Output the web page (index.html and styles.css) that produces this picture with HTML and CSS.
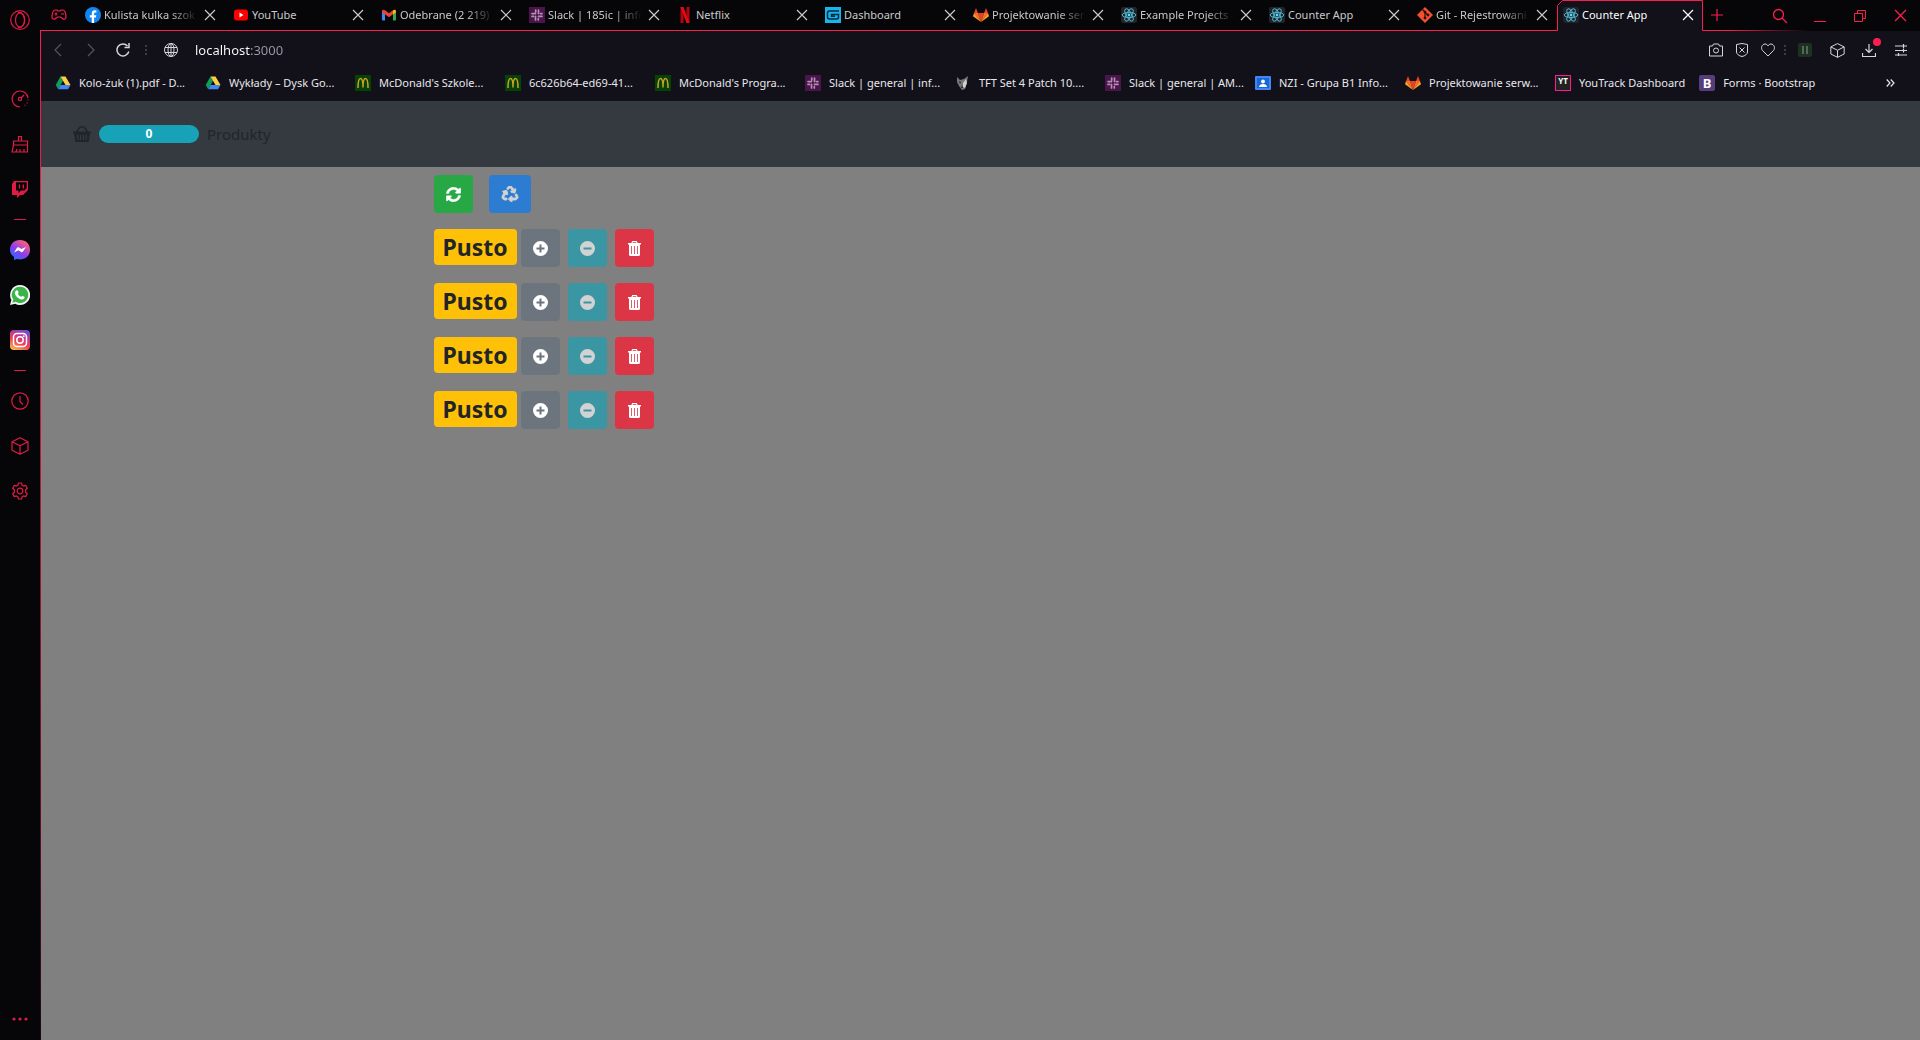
FILE: index.html
```html
<!DOCTYPE html>
<html lang="pl">
<head>
<meta charset="utf-8">
<meta name="viewport" content="width=device-width, initial-scale=1">
<title>Counter App</title>
<link rel="stylesheet" href="styles.css">
</head>
<body>
<svg class="sprite" aria-hidden="true">
  <symbol id="close" viewBox="0 0 12 12"><path d="M1 1l10 10M11 1L1 11" fill="none" stroke="currentColor" stroke-width="1.2"/></symbol>
  <symbol id="cube" viewBox="0 0 18 18"><path d="M9 .7l8 4v8.500l-8 4-8-4V4.700zM1 4.700l8 4 8-4M9 8.700v8.500" fill="none" stroke="currentColor" stroke-width="1.200" stroke-linejoin="round"/></symbol>
  <symbol id="slack" viewBox="0 0 16 16"><path fill="#4a154b" d="M0 0h16v16H0z"/><g fill="none" stroke="#b58fb6" stroke-width="1.700" stroke-linecap="round"><path d="M6.700 5V3M9.500 6.600V3M11.500 6.600H13M9.500 9.400H13M9.300 11.500V13M6.500 9.400V13M4.500 9.400H3M6.500 6.600H3"/></g></symbol>
  <symbol id="react" viewBox="0 0 16 16"><rect width="16" height="16" rx="2" fill="#20232a"/><g fill="none" stroke="#4fb3cc" stroke-width="1"><ellipse cx="8" cy="8" rx="6.800" ry="2.600"/><ellipse cx="8" cy="8" rx="6.800" ry="2.600" transform="rotate(60 8 8)"/><ellipse cx="8" cy="8" rx="6.800" ry="2.600" transform="rotate(120 8 8)"/></g><circle cx="8" cy="8" r="1.400" fill="#61dafb"/></symbol>
  <symbol id="gitlab" viewBox="0 0 16 16"><path fill="#e24329" d="M8 15L5 6h6z"/><path fill="#fc6d26" d="M8 15L5 6H1zM8 15l3-9h4z"/><path fill="#fca326" d="M1 6l-1 3.200L8 15zM15 6l1 3.200L8 15z"/><path fill="#e24329" d="M1 6l2-5 2 5zM11 6l2-5 2 5z"/></symbol>
  <symbol id="drive" viewBox="0 0 16 16"><path fill="#0f9d58" d="M5.500 1.500L.7 10l2.500 4.200L8 5.800z"/><path fill="#ffcd40" d="M5.500 1.500h5l5 8.500h-5z"/><path fill="#4285f4" d="M5.500 10h10l-2.500 4.200H3.200z"/></symbol>
  <symbol id="mcd" viewBox="0 0 16 16"><path fill="#064206" d="M0 0h16v16H0z"/><path d="M3 13C3 7 4 3.500 5.500 3.500S8 7 8 12.500C8 7 9 3.500 10.500 3.500S13 7 13 13" fill="none" stroke="#c9a227" stroke-width="1.500"/></symbol>
  <symbol id="refresh" viewBox="0 0 512 512"><path fill="currentColor" stroke="currentColor" stroke-width="16" d="M370.720 133.280C339.458 104.008 298.888 87.962 255.848 88c-77.458.068-144.328 53.178-162.791 126.850-1.344 5.363-6.122 9.150-11.651 9.150H24.103c-7.498 0-13.194-6.807-11.807-14.176C33.933 94.924 134.813 8 256 8c66.448 0 126.791 26.136 171.315 68.685L463.030 40.970C478.149 25.851 504 36.559 504 57.941V192c0 13.255-10.745 24-24 24H345.941c-21.382 0-32.090-25.851-16.971-40.971l41.750-41.749zM32 296h134.059c21.382 0 32.090 25.851 16.971 40.971l-41.750 41.750c31.262 29.273 71.835 45.319 114.876 45.280 77.418-.070 144.315-53.144 162.787-126.849 1.344-5.363 6.122-9.150 11.651-9.150h57.304c7.498 0 13.194 6.807 11.807 14.176C478.067 417.076 377.187 504 256 504c-66.448 0-126.791-26.136-171.315-68.685L48.970 471.030C33.851 486.149 8 475.441 8 454.059V320c0-13.255 10.745-24 24-24z"/></symbol>
  <symbol id="recycle" viewBox="0 0 512 512"><path fill="currentColor" stroke="currentColor" stroke-width="30" d="M184.561 261.903c3.232 13.997-12.123 24.635-24.068 17.168l-40.736-25.455-50.867 81.402C55.606 356.273 70.960 384 96.012 384H148c6.627 0 12 5.373 12 12v40c0 6.627-5.373 12-12 12H96.115c-75.334 0-121.302-83.048-81.408-146.880l50.822-81.388-40.725-25.448c-12.081-7.547-8.966-25.961 4.879-29.158l110.237-25.450c8.611-1.988 17.201 3.381 19.189 11.990l25.452 110.237zm98.561-182.915l41.289 66.076-40.740 25.457c-12.051 7.528-9 25.953 4.879 29.158l110.237 25.450c8.672 1.999 17.215-3.438 19.189-11.990l25.450-110.237c3.197-13.844-11.990-24.719-24.068-17.168l-40.687 25.424-41.263-66.082c-37.521-60.033-125.209-60.171-162.816 0l-17.963 28.766c-3.510 5.620-1.800 13.021 3.820 16.533l33.919 21.195c5.620 3.512 13.024 1.803 16.536-3.817l17.961-28.743c12.712-20.341 41.973-19.676 54.257-.022zM497.288 301.120l-27.515-44.065c-3.511-5.623-10.916-7.334-16.538-3.821l-33.861 21.159c-5.620 3.512-7.330 10.915-3.818 16.536l27.564 44.112c13.257 21.211-2.057 48.960-27.136 48.960H320V336.020c0-14.213-17.242-21.383-27.313-11.313l-80 79.981c-6.249 6.248-6.249 16.379 0 22.627l80 79.989C302.689 517.308 320 510.300 320 495.989V448h95.880c75.274 0 121.335-82.997 81.408-146.880z"/></symbol>
  <symbol id="plus" viewBox="0 0 15 15"><path fill="currentColor" fill-rule="evenodd" d="M7.500 0a7.500 7.500 0 1 0 0 15 7.500 7.500 0 0 0 0-15zM6.500 3.500h2v3h3v2h-3v3h-2v-3h-3v-2h3z"/></symbol>
  <symbol id="minus" viewBox="0 0 15 15"><path fill="currentColor" fill-rule="evenodd" d="M7.500 0a7.500 7.500 0 1 0 0 15 7.500 7.500 0 0 0 0-15zM3.500 6.500h8v2h-8z"/></symbol>
  <symbol id="trash" viewBox="0 0 15 15"><path fill="currentColor" fill-rule="evenodd" d="M5.300 0h4.400l1 2H14v1.500h-1V13a1.800 1.800 0 0 1-1.800 2H3.800A1.800 1.800 0 0 1 2 13V3.500H1V2h3.300zM5.900 1.200L5.600 2h3.800l-.3-.8zM4.200 5v8h.8V5zm3 0v8h.8V5zm3 0v8h.8V5z"/></symbol>
</svg>

<nav class="sidebar" aria-label="Panel boczny">
  <button class="side-btn side-logo" aria-label="Opera"><svg width="20" height="20" viewBox="0 0 20 20"><g fill="none" stroke="currentColor" stroke-width="1.200"><circle cx="10" cy="10" r="9.300"/><ellipse cx="10" cy="10" rx="4.500" ry="7"/><path d="M8 2.500c9-1 9 16 0 15"/></g></svg></button>
  <button class="side-btn" aria-label="GX Control"><svg width="18" height="18" viewBox="0 0 18 18"><g fill="none" stroke="currentColor" stroke-width="1.200"><path d="M9 17A8 8 0 1 1 17 8"/><path d="M17 9.500A8 8 0 0 1 12 16.500" stroke-dasharray="1 2"/><circle cx="9" cy="9" r="1.600"/><path d="M10 8l3-3"/></g></svg></button>
  <button class="side-btn" aria-label="GX Cleaner"><svg width="18" height="18" viewBox="0 0 18 18"><path d="M7.500 6V1.500h3V6M2.500 6h14v4h-14zM2.500 10L1 17h15.500v-7M5 17l1-3M9 17v-3M13 17v-3" fill="none" stroke="currentColor" stroke-width="1.200"/></svg></button>
  <button class="side-btn" aria-label="Twitch"><svg width="18" height="18" viewBox="0 0 18 18"><path fill="currentColor" fill-rule="evenodd" d="M3 1h14v9l-5 5H9l-3 3v-3H1V4zM5 2.300v8.200h2.500V13L10 10.500h3.500l2.200-2.200v-6z"/><path d="M8.500 4.500v4M12.300 4.500v4" stroke="currentColor" stroke-width="1.300"/></svg></button>
  <hr class="side-sep">
  <button class="side-btn" aria-label="Messenger"><svg width="20" height="20" viewBox="0 0 20 20"><defs><linearGradient id="msg" x1="0" y1="1" x2=".7" y2="0"><stop offset="0" stop-color="#0a7cff"/><stop offset=".5" stop-color="#8a3cf0"/><stop offset="1" stop-color="#ff6178"/></linearGradient></defs><path fill="url(#msg)" d="M10 0c6 0 10 4.200 10 9.700s-4 9.700-10 9.700c-1 0-2-.1-3-.4l-3 1V17C1.500 15.200 0 12.600 0 9.700 0 4.200 4 0 10 0z"/><path fill="#fff" d="M4 12.500L7 7.800c.5-.7 1.300-.8 2-.4l2.400 1.700L16 6.900l-3 4.700c-.5.700-1.300.9-2 .4l-2.400-1.700z"/></svg></button>
  <button class="side-btn" aria-label="WhatsApp"><svg width="20" height="20" viewBox="0 0 20 20"><path fill="#f4f4f4" d="M10 0a10 10 0 1 1-4.800 18.700L0 20l1.400-5A10 10 0 0 1 10 0z"/><path fill="#3ab449" d="M10.100 1.700a8.200 8.200 0 1 1-4.500 15.100l-3.200.9.900-3.100a8.200 8.200 0 0 1 6.800-12.900z"/><path fill="#fff" d="M6.700 5.300c.6-.2 1 0 1.200.5l.7 1.700c0 .5-.6.900-.9 1.300.8 1.500 2 2.500 3.500 3.200l1.100-1.200 2.300 1.100c.2 1.700-1.300 2.600-2.700 2.500-3.500-.5-6.400-3.200-7.100-6.200 0-1.200.7-2.500 1.900-2.900z"/></svg></button>
  <button class="side-btn" aria-label="Instagram"><svg width="20" height="20" viewBox="0 0 20 20"><defs><linearGradient id="ig" x1=".2" y1="1" x2=".7" y2="0"><stop offset="0" stop-color="#fdb94e"/><stop offset=".4" stop-color="#ee4156"/><stop offset=".75" stop-color="#b53aa0"/><stop offset="1" stop-color="#6a4fd0"/></linearGradient></defs><rect width="20" height="20" rx="4" fill="url(#ig)"/><g fill="none" stroke="#fff" stroke-width="1.500"><rect x="3.500" y="3.500" width="13" height="13" rx="3.500"/><circle cx="10" cy="10" r="3.200"/></g><circle cx="13.800" cy="6.200" r=".9" fill="#fff"/></svg></button>
  <hr class="side-sep">
  <button class="side-btn" aria-label="Historia"><svg width="18" height="18" viewBox="0 0 18 18"><g fill="none" stroke="currentColor" stroke-width="1.200"><circle cx="9" cy="9" r="8.200"/><path d="M9 4v5.500l3 3"/></g></svg></button>
  <button class="side-btn" aria-label="Rozszerzenia"><svg width="18" height="18"><use href="#cube"/></svg></button>
  <button class="side-btn" aria-label="Ustawienia"><svg width="18" height="18" viewBox="0 0 18 18"><g fill="none" stroke="currentColor" stroke-width="1.200" stroke-linejoin="round"><circle cx="9" cy="9" r="2.800"/><path d="M7.400 1h3.200l.5 2.300 1.400.8 2.200-.7 1.600 2.800-1.700 1.600v2.400l1.700 1.600-1.600 2.800-2.200-.7-1.400.8-.5 2.300H7.400l-.5-2.300-1.400-.8-2.200.7-1.600-2.800 1.700-1.600V7.800L1.700 6.200l1.600-2.800 2.200.7 1.400-.8z"/></g></svg></button>
  <button class="side-btn side-more" aria-label="Więcej"><svg width="16" height="4" viewBox="0 0 16 4" fill="currentColor"><circle cx="2" cy="2" r="1.600"/><circle cx="8" cy="2" r="1.600"/><circle cx="14" cy="2" r="1.600"/></svg></button>
</nav>

<div class="window">
  <header class="tabstrip">
    <button class="gx-btn" aria-label="GX Corner"><svg width="16" height="12" viewBox="0 0 16 12"><g fill="none" stroke="currentColor" stroke-width="1.200"><path d="M4 1h2l1 1h2l1-1h2c2 0 3 4 3 7 0 2-2 3-3.500 1.500L9.500 8h-3l-2 1.500C3 11 1 10 1 8c0-3 1-7 3-7z"/><path d="M5 3.500v3M3.500 5h3M10 5h3"/></g></svg></button>
    <div class="tabs">
      <div class="tab"><svg class="fav" viewBox="0 0 16 16"><circle cx="8" cy="8" r="8" fill="#1285f3"/><path fill="#fff" d="M6.800 16v-5.500h-2V8.200h2V6.400c0-2 1.200-3.100 3-3.100l1.600.1v2h-1c-1 0-1.300.6-1.300 1.200v1.600h2.200l-.4 2.300H9.100V16z"/></svg><a class="title faded" href="#">Kulista kulka szok</a><button class="close" aria-label="Zamknij"><svg><use href="#close"/></svg></button></div>
      <div class="tab"><svg class="fav" viewBox="0 0 16 16"><rect x="1" y="2.500" width="14" height="11" rx="3" fill="#f00"/><path fill="#fff" d="M6.500 5.500v5L10.500 8z"/></svg><a class="title" href="#">YouTube</a><button class="close" aria-label="Zamknij"><svg><use href="#close"/></svg></button></div>
      <div class="tab"><svg class="fav" viewBox="0 0 16 16"><path fill="#4285f4" d="M1 4l3 2v7.500H2a1 1 0 0 1-1-1z"/><path fill="#34a853" d="M15 4l-3 2v7.500h2a1 1 0 0 0 1-1z"/><path fill="#ea4335" d="M1 4.300C1 2.500 2.500 2.300 4 3.300l4 3 4-3v4L8 10.300 1 5.300z"/><path fill="#fbbc04" d="M12 3.300c1.500-1 3-.8 3 1v1l-3 2.200z"/></svg><a class="title faded" href="#">Odebrane (2 219)</a><button class="close" aria-label="Zamknij"><svg><use href="#close"/></svg></button></div>
      <div class="tab"><svg class="fav"><use href="#slack"/></svg><a class="title faded" href="#">Slack | 185ic | info</a><button class="close" aria-label="Zamknij"><svg><use href="#close"/></svg></button></div>
      <div class="tab"><svg class="fav" viewBox="0 0 16 16"><path fill="#b1060f" d="M3.500 0h3v16h-3zM9.500 0h3v16h-3z"/><path fill="#e50914" d="M3.500 0h3l6 16h-3z"/></svg><a class="title" href="#">Netflix</a><button class="close" aria-label="Zamknij"><svg><use href="#close"/></svg></button></div>
      <div class="tab"><svg class="fav" viewBox="0 0 16 16"><path fill="#18b4ee" d="M0 0h16v16H0z"/><path d="M14 4H4.500Q2.500 4 2.500 6v4q0 2 2 2h7q2 0 2-2V7.500H6.500v1.700H10" fill="none" stroke="#072a3a" stroke-width="1.500"/></svg><a class="title" href="#">Dashboard</a><button class="close" aria-label="Zamknij"><svg><use href="#close"/></svg></button></div>
      <div class="tab"><svg class="fav"><use href="#gitlab"/></svg><a class="title faded" href="#">Projektowanie ser</a><button class="close" aria-label="Zamknij"><svg><use href="#close"/></svg></button></div>
      <div class="tab"><svg class="fav"><use href="#react"/></svg><a class="title faded" href="#">Example Projects -</a><button class="close" aria-label="Zamknij"><svg><use href="#close"/></svg></button></div>
      <div class="tab"><svg class="fav"><use href="#react"/></svg><a class="title" href="#">Counter App</a><button class="close" aria-label="Zamknij"><svg><use href="#close"/></svg></button></div>
      <div class="tab"><svg class="fav" viewBox="0 0 16 16"><path fill="#f4502f" d="M8 0l8 8-8 8-8-8z"/><g stroke="#1a0d0a" fill="#1a0d0a"><path d="M5.500 2.500L8 5v6M8 5.500l3 2.500" fill="none" stroke-width="1.100"/><circle cx="8" cy="5" r="1"/><circle cx="8" cy="11" r="1"/><circle cx="11" cy="8" r="1"/></g></svg><a class="title faded" href="#">Git - Rejestrowani</a><button class="close" aria-label="Zamknij"><svg><use href="#close"/></svg></button></div>
      <div class="tab active"><svg class="tab-frame" viewBox="0 0 147 31" preserveAspectRatio="none"><path d="M0 31v-.5h.5V5.500l5-5H145.500v30h1.500v.5z" fill="#121019"/><path d="M0 30.500h.5V5.500l5-5H145.500v30H147" fill="none" stroke="#fa1e4e"/></svg><svg class="fav"><use href="#react"/></svg><a class="title" href="#">Counter App</a><button class="close" aria-label="Zamknij"><svg><use href="#close"/></svg></button></div>
    </div>
    <button class="new-tab" aria-label="Nowa karta"><svg width="12" height="12" viewBox="0 0 12 12"><path d="M6 0v12M0 6h12" stroke="currentColor" stroke-width="1.200"/></svg></button>
    <div class="win-controls">
      <button aria-label="Szukaj"><svg width="16" height="16" viewBox="0 0 16 16"><g fill="none" stroke="currentColor" stroke-width="1.300"><circle cx="6.500" cy="6.500" r="5"/><path d="M10 10l5 5"/></g></svg></button>
      <button aria-label="Minimalizuj"><svg width="12" height="14" viewBox="0 0 12 14"><path d="M0 12.500h12" stroke="currentColor"/></svg></button>
      <button aria-label="Przywróć"><svg width="12" height="12" viewBox="0 0 12 12"><path d="M3.500 3.500v-3h8v8h-3M.5 3.500h8v8h-8z" fill="none" stroke="currentColor"/></svg></button>
      <button aria-label="Zamknij okno"><svg width="13" height="13"><use href="#close"/></svg></button>
    </div>
  </header>

  <div class="frame">
    <div class="toolbar">
      <button class="tool dim" aria-label="Wstecz"><svg width="8" height="14" viewBox="0 0 8 14"><path d="M7 1L1 7l6 6" fill="none" stroke="currentColor" stroke-width="1.200"/></svg></button>
      <button class="tool dim" aria-label="Dalej"><svg width="8" height="14" viewBox="0 0 8 14"><path d="M1 1l6 6-6 6" fill="none" stroke="currentColor" stroke-width="1.200"/></svg></button>
      <button class="tool" aria-label="Odśwież"><svg width="14" height="14" viewBox="0 0 14 14"><path d="M12.800 8.500A6 6 0 1 1 11.500 3M13 0v4.500H8.500" fill="none" stroke="currentColor" stroke-width="1.500"/></svg></button>
      <span class="dots"></span>
      <button class="tool wide" aria-label="Informacje o stronie"><svg width="14" height="14" viewBox="0 0 14 14"><g fill="none" stroke="currentColor"><circle cx="7" cy="7" r="6.500"/><ellipse cx="7" cy="7" rx="3" ry="6.500"/><path d="M1 4.500h12M1 9.500h12M7 .5v13"/></g></svg></button>
      <input class="address" type="text" aria-label="Adres" value="localhost:3000">
      <button class="tool mini" aria-label="Migawka"><svg width="14" height="14" viewBox="0 0 14 14"><g fill="none" stroke="currentColor"><path d="M.5 3h3l1-2h5l1 2h3v10H.5z"/><circle cx="7" cy="7.500" r="2.500"/></g></svg></button>
      <button class="tool mini" aria-label="Blokowanie reklam"><svg width="12" height="14" viewBox="0 0 12 14"><path d="M6 .5l5.500 1V9c0 2-2.500 4-5.500 4.500C3 13 .5 11 .5 9V1.500zM3.500 4.500l5 5M8.500 4.500l-5 5" fill="none" stroke="currentColor"/></svg></button>
      <button class="tool mini" aria-label="Dodaj do zakładek"><svg width="14" height="14" viewBox="0 0 14 14"><path d="M7 13L1.500 7.500C-.5 5 1 1 4 1c1.500 0 2.500 1 3 2 .5-1 1.500-2 3-2 3 0 4.500 4 2.500 6.500z" fill="none" stroke="currentColor"/></svg></button>
      <span class="dots small"></span>
      <button class="tool" aria-label="Rozszerzenie"><svg width="14" height="14" viewBox="0 0 14 14"><rect width="14" height="14" rx="2" fill="#1c3220"/><path d="M5 3v8M9 3v8" stroke="#55665a" stroke-width="2"/></svg></button>
      <button class="tool" aria-label="Rozszerzenia"><svg width="15" height="15"><use href="#cube"/></svg></button>
      <button class="tool notify" aria-label="Pobrane"><svg width="14" height="14" viewBox="0 0 14 14"><path d="M7 1v8.500M3.500 6L7 9.500 10.500 6M.5 10v3.500h13V10" fill="none" stroke="currentColor" stroke-width="1.200"/></svg></button>
      <button class="tool" aria-label="Łatwa konfiguracja"><svg width="12" height="12" viewBox="0 0 12 12"><path d="M0 2h12M0 6.500h12M0 11h12M8.500 0v4M8.500 4.500v4M3.500 9v3.500" stroke="currentColor" stroke-width="1.200"/></svg></button>
    </div>
    <nav class="bookmarks" aria-label="Zakładki">
      <a href="#"><svg class="fav"><use href="#drive"/></svg><span>Kolo-żuk (1).pdf - D...</span></a>
      <a href="#"><svg class="fav"><use href="#drive"/></svg><span>Wykłady – Dysk Go...</span></a>
      <a href="#"><svg class="fav"><use href="#mcd"/></svg><span>McDonald's Szkole...</span></a>
      <a href="#"><svg class="fav"><use href="#mcd"/></svg><span>6c626b64-ed69-41...</span></a>
      <a href="#"><svg class="fav"><use href="#mcd"/></svg><span>McDonald's Progra...</span></a>
      <a href="#"><svg class="fav"><use href="#slack"/></svg><span>Slack | general | inf...</span></a>
      <a href="#"><svg class="fav" viewBox="0 0 16 16"><path fill="#77777b" d="M2 2l3 3 4-1 4-3-1 6-2 7-3 1-3-4-2-4z"/><path fill="#d0d0d0" d="M8 8l3-4 1 4-2 5-2-1z"/><path fill="#26262a" d="M4 6l2 1-1 2zM7 10l1 3H6z"/></svg><span>TFT Set 4 Patch 10....</span></a>
      <a href="#"><svg class="fav"><use href="#slack"/></svg><span>Slack | general | AM...</span></a>
      <a href="#"><svg class="fav" viewBox="0 0 16 16"><rect y="1" width="16" height="14" rx="1" fill="#4285f4"/><path fill="#1967d2" d="M2 3h12v10H2z"/><circle cx="8" cy="6.500" r="1.900" fill="#fff"/><path fill="#fff" d="M4 12c0-2 2-3 4-3s4 1 4 3z"/></svg><span>NZI - Grupa B1 Info...</span></a>
      <a href="#"><svg class="fav"><use href="#gitlab"/></svg><span>Projektowanie serw...</span></a>
      <a class="fit" href="#"><span class="fav yt">YT</span><span>YouTrack Dashboard</span></a>
      <a class="fit" href="#"><span class="fav bs">B</span><span>Forms · Bootstrap</span></a>
      <button class="more" aria-label="Więcej zakładek"><svg width="9" height="8" viewBox="0 0 9 8"><path d="M.7.500L4 4 .7 7.500M4.700.5L8 4 4.700 7.500" fill="none" stroke="currentColor" stroke-width="1.200"/></svg></button>
    </nav>

    <div class="page">
      <nav class="navbar">
        <svg width="18" height="16" viewBox="0 0 18 16"><path d="M3.500 6l3-4.500M14.500 6l-3-4.500M6.500 1h5" fill="none" stroke="currentColor" stroke-width="1.500"/><path fill="currentColor" fill-rule="evenodd" d="M0 5.500h18v2h-1L15.700 16H2.300L1 7.500H0zM4 9l.5 5h1.200L5.300 9zM7 9v5h1.200V9zM9.800 9v5H11V9zM12.700 9l-.4 5h1.200l.5-5z"/></svg>
        <span class="pill">0</span>
        <a class="brand" href="#">Produkty</a>
      </nav>
      <main class="counters">
        <div class="row actions">
          <button class="btn success" aria-label="Resetuj"><svg><use href="#refresh"/></svg></button>
          <button class="btn primary" aria-label="Przywróć produkty" disabled><svg><use href="#recycle"/></svg></button>
        </div>
        <div class="row"><span class="badge">Pusto</span><div class="group"><button class="btn secondary" aria-label="Dodaj"><svg><use href="#plus"/></svg></button><button class="btn info" aria-label="Odejmij" disabled><svg><use href="#minus"/></svg></button><button class="btn danger" aria-label="Usuń"><svg><use href="#trash"/></svg></button></div></div>
        <div class="row"><span class="badge">Pusto</span><div class="group"><button class="btn secondary" aria-label="Dodaj"><svg><use href="#plus"/></svg></button><button class="btn info" aria-label="Odejmij" disabled><svg><use href="#minus"/></svg></button><button class="btn danger" aria-label="Usuń"><svg><use href="#trash"/></svg></button></div></div>
        <div class="row"><span class="badge">Pusto</span><div class="group"><button class="btn secondary" aria-label="Dodaj"><svg><use href="#plus"/></svg></button><button class="btn info" aria-label="Odejmij" disabled><svg><use href="#minus"/></svg></button><button class="btn danger" aria-label="Usuń"><svg><use href="#trash"/></svg></button></div></div>
        <div class="row"><span class="badge">Pusto</span><div class="group"><button class="btn secondary" aria-label="Dodaj"><svg><use href="#plus"/></svg></button><button class="btn info" aria-label="Odejmij" disabled><svg><use href="#minus"/></svg></button><button class="btn danger" aria-label="Usuń"><svg><use href="#trash"/></svg></button></div></div>
      </main>
    </div>
  </div>
</div>
</body>
</html>
```
FILE: styles.css
```css
:root {
  --accent: #fa1e4e;
  --chrome: #121019;
  --strip: #060608;
}

* { box-sizing: border-box; }

body {
  margin: 0;
  min-height: 100vh;
  display: grid;
  grid-template-columns: 40px minmax(0, 1fr);
  background: var(--strip);
  font-family: "Noto Sans", "Open Sans", sans-serif;
  font-size: 11px;
  line-height: 16px;
}

button {
  display: flex;
  align-items: center;
  justify-content: center;
  flex: none;
  padding: 0;
  border: 0;
  background: none;
  color: inherit;
  font: inherit;
}

a { color: inherit; text-decoration: none; }
svg { display: block; flex: none; }
.sprite { position: absolute; width: 0; height: 0; }
.fav { width: 16px; height: 16px; flex: none; }

/* Sidebar */
.sidebar {
  display: flex;
  flex-direction: column;
  color: #e01c46;
}
.side-btn { height: 45px; }
.side-logo { height: 40px; margin-bottom: 36px; }
.side-sep {
  width: 12px;
  height: 1px;
  margin: 8px auto 7px;
  border: 0;
  background: #e01c46;
}
.side-more { height: 42px; margin-top: auto; }

/* Tab strip */
.window { display: flex; flex-direction: column; min-width: 0; }
.tabstrip {
  display: flex;
  height: 31px;
  color: var(--accent);
}
.gx-btn {
  width: 37px;
  border-bottom: 1px solid var(--accent);
}
.tabs {
  display: flex;
  flex: 0 1 1627px;
  min-width: 0;
}
.tab {
  position: relative;
  display: flex;
  align-items: center;
  flex: 0 1 148px;
  min-width: 0;
  padding: 0 9px 0 8px;
  border-bottom: 1px solid var(--accent);
  color: #c9c9cc;
}
.tab .title {
  position: relative;
  flex: 1;
  min-width: 0;
  margin: 0 6px 0 3px;
  overflow: hidden;
  white-space: nowrap;
}
.tab .faded { mask-image: linear-gradient(90deg, #000 calc(100% - 28px), transparent); }
.tab .fav, .tab .close { position: relative; }
.close svg { width: 12px; height: 12px; }
.tab.active {
  flex-basis: 147px;
  padding: 0 10px 1px 6px;
  border: 0;
  color: #fff;
}
.tab .tab-frame {
  position: absolute;
  inset: 0;
  width: 100%;
  height: 100%;
}
.new-tab {
  width: 26px;
  border-bottom: 1px solid var(--accent);
}
.win-controls {
  display: flex;
  flex: 1 0 160px;
  justify-content: flex-end;
  background: linear-gradient(90deg, var(--accent), transparent 80px) bottom / 100% 1px no-repeat;
}
.win-controls button { width: 40px; }

/* Toolbar */
.frame {
  display: flex;
  flex-direction: column;
  flex: 1;
  padding-left: 1px;
  background: linear-gradient(var(--accent), #c01a3e 40%, #38091a 95%, #1c0710);
}
.toolbar {
  display: flex;
  align-items: center;
  height: 38px;
  padding-right: 3px;
  background: var(--chrome);
  color: #d6d6da;
}
.tool { width: 32px; height: 100%; }
.tool.dim { width: 33px; color: #55555c; }
.tool.wide { width: 36px; }
.tool.mini { width: 26px; }
.dots {
  width: 14px;
  height: 12px;
  background: radial-gradient(circle, #3d3b45 1px, transparent 1px) center / 100% 4px;
}
.dots.small { width: 8px; }
.address {
  flex: 1;
  min-width: 0;
  height: 28px;
  padding: 0 6px;
  border: 0;
  outline: 0;
  color: #fff;
  font: 13px/20px "Noto Sans", "Open Sans", sans-serif;
  background: linear-gradient(90deg, #fff 62px, #9a9aa6 62px);
  background-clip: text;
  -webkit-background-clip: text;
  -webkit-text-fill-color: transparent;
}
.notify { position: relative; }
.notify::after {
  content: "";
  position: absolute;
  top: 7px;
  right: 4px;
  width: 8px;
  height: 8px;
  border-radius: 50%;
  background: var(--accent);
}

/* Bookmarks */
.bookmarks {
  display: flex;
  align-items: center;
  height: 32px;
  padding: 0 25px 4px 14px;
  background: var(--chrome);
  color: #e8e8ec;
}
.bookmarks a {
  display: flex;
  align-items: center;
  gap: 8px;
  flex: 0 1 150px;
  min-width: 0;
  white-space: nowrap;
}
.bookmarks a.fit { flex: 0 0 auto; margin-right: 14px; }
.bookmarks .more { margin-left: auto; }
.yt {
  border: 1px solid #ff1a8c;
  background: #222;
  color: #fff;
  font-size: 8px;
  font-weight: 700;
  line-height: 10px;
  text-align: center;
}
.bs {
  border-radius: 2px;
  background: #563d7c;
  color: #fff;
  font-size: 13px;
  font-weight: 700;
  text-align: center;
}

/* Counter page */
.page {
  flex: 1;
  background: #808080;
  color: #212529;
}
.navbar {
  display: flex;
  align-items: center;
  gap: 8px;
  height: 66px;
  padding: 0 32px;
  background: #343a40;
}
.pill {
  width: 100px;
  height: 18px;
  border-radius: 9px;
  background: #17a2b8;
  color: #fff;
  font-size: 12px;
  font-weight: 700;
  line-height: 18px;
  text-align: center;
}
.brand { font-size: 15px; line-height: 24px; }
.counters {
  display: flex;
  flex-direction: column;
  gap: 16px;
  max-width: 1140px;
  margin: 0 auto;
  padding: 8px 23px;
}
.row { display: flex; gap: 4px; }
.row.actions { gap: 16px; }
.group { display: flex; gap: 8px; }
.badge {
  height: 36px;
  padding: 0 9px;
  border-radius: 4px;
  background: #ffc107;
  font-size: 23px;
  font-weight: 700;
  line-height: 37px;
}
.btn {
  height: 38px;
  padding: 0 12px;
  border-radius: 4px;
  color: #fff;
}
.btn svg { width: 15px; height: 15px; }
.btn:disabled { opacity: 0.65; }
.success { background: #28a745; }
.primary { background: #007bff; }
.btn.primary svg { width: 18px; height: 16px; }
.secondary { background: #6c757d; }
.info { background: #17a2b8; }
.danger { background: #dc3545; }
```
